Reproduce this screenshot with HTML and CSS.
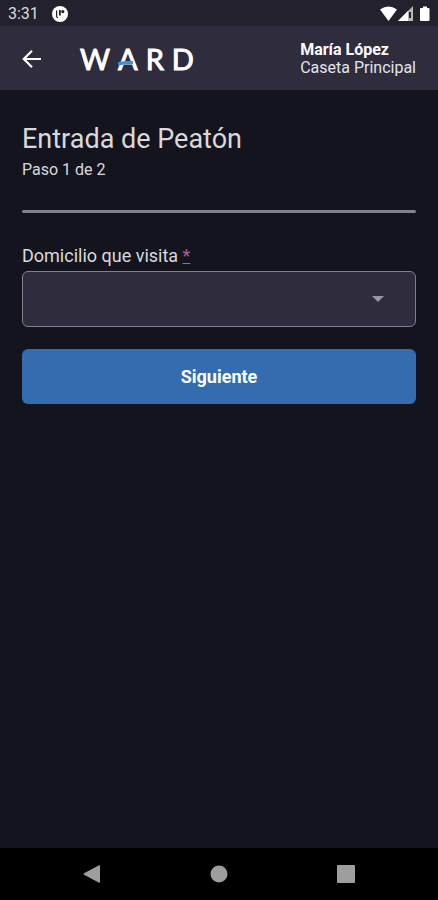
FILE: index.html
```html
<!DOCTYPE html>
<html lang="es">
<head>
<meta charset="utf-8">
<meta name="viewport" content="width=device-width, initial-scale=1">
<title>Entrada de Peatón</title>
<link rel="stylesheet" href="styles.css">
</head>
<body>
<div class="status-bar">
  <span class="status-time">3:31</span>
  <svg class="status-app" viewBox="0 0 16 16" aria-hidden="true">
    <circle cx="8" cy="8" r="8" fill="#fff"/>
    <path d="M4.600 4.500V10.500Q4.800 11.600 6 11.600" fill="none" stroke="#22212d" stroke-width="1.200"/>
    <path d="M7 4H8.800V9.500H7Z" fill="#22212d"/>
    <circle cx="10.800" cy="5.600" r="1.600" fill="#22212d"/>
  </svg>
  <svg class="status-signals" viewBox="0 0 50 16" aria-hidden="true">
    <path d="M0 3.500Q8.500-2.500 17 3.500L8.500 15Z" fill="#fff"/>
    <path d="M18 15L33 0V15Z" fill="#b8b8b4"/>
    <path d="M18 15L28 5V15Z" fill="#fff"/>
    <path d="M29 6h2v6h-2z" fill="#22212d"/>
    <path d="M40 3a1 1 0 0 1 1-1h2V.5h4V2h1.500a1 1 0 0 1 1 1V14a1 1 0 0 1-1 1H41a1 1 0 0 1-1-1Z" fill="#fff"/>
  </svg>
</div>
<header class="app-bar">
  <button class="back" type="button" aria-label="Atrás">
    <svg viewBox="0 0 20 20" aria-hidden="true"><path d="M19 10H2.500M10 1.800L1.800 10L10 18.200" fill="none" stroke="#fff" stroke-width="2.200"/></svg>
  </button>
  <div class="logo"><span>W</span><span class="logo-a">A<svg class="logo-bar" viewBox="0 0 20 6" aria-hidden="true"><path d="M0 4Q7 2.200 15 2.600" fill="none" stroke="#3f8fe0" stroke-width="3.200"/></svg></span><span>R</span><span>D</span></div>
  <div class="user">
    <strong>María López</strong>
    <span>Caseta Principal</span>
  </div>
</header>
<main class="content">
  <h1>Entrada de Peatón</h1>
  <p class="step">Paso 1 de 2</p>
  <hr>
  <form class="form">
    <label for="domicilio">Domicilio que visita <span class="required">*</span></label>
    <div class="select-box">
      <select id="domicilio" required><option value=""></option></select>
      <svg class="caret" viewBox="0 0 12 6" aria-hidden="true"><path d="M0 0H12L6 6Z" fill="#9896a6"/></svg>
    </div>
    <button class="next" type="button">Siguiente</button>
  </form>
</main>
<nav class="nav-bar" aria-label="Sistema">
  <button type="button" aria-label="Volver"><svg viewBox="0 0 18 18"><path d="M1 8.200L16 .2Q17 0 17 1V17Q17 18 16 17.800L1 9.800Q0 9 1 8.200Z" fill="#9e9e9e"/></svg></button>
  <button type="button" aria-label="Inicio"><svg viewBox="0 0 18 18"><circle cx="9" cy="9" r="8.500" fill="#9e9e9e"/></svg></button>
  <button type="button" aria-label="Recientes"><svg viewBox="0 0 18 18"><rect width="18" height="18" rx="1" fill="#9e9e9e"/></svg></button>
</nav>
</body>
</html>
```
FILE: styles.css
```css
* { box-sizing: border-box; }

body {
  margin: 0;
  min-height: 100vh;
  display: flex;
  flex-direction: column;
  background: #14141f;
  color: #d9d9dc;
  font-family: Roboto, "Liberation Sans", sans-serif;
  font-size: 16px;
}

button {
  padding: 0;
  border: 0;
  background: none;
  font: inherit;
  color: inherit;
}

svg { display: block; }

.status-bar {
  display: flex;
  align-items: center;
  height: 26px;
  padding: 2px 8px 0;
  background: #22212d;
}

.status-time { font-size: 16px; line-height: 24px; color: #dcdcdc; }
.status-app { width: 16px; height: 16px; margin-left: 13px; }
.status-signals { width: 50px; height: 16px; margin-left: auto; }

.app-bar {
  display: flex;
  align-items: center;
  height: 64px;
  padding: 2px 22px 0;
  background: #2e2c3d;
}

.back svg { width: 20px; height: 20px; }

.logo {
  display: flex;
  gap: 8px;
  margin-left: 38px;
  font-family: Lato, sans-serif;
  font-size: 29px;
  line-height: 32px;
  color: #fff;
  -webkit-text-stroke: 1px #fff;
}

.logo-a { position: relative; }
.logo-bar { position: absolute; left: 0; top: 17px; width: 20px; height: 6px; }

.user {
  display: flex;
  flex-direction: column;
  margin-left: auto;
  font-size: 16px;
  line-height: 18px;
  color: #e4e4e8;
}

.user strong { font-weight: 700; color: #fff; }

.content { flex: 1; padding: 32px 22px; }

h1 {
  margin: 0;
  font-size: 27px;
  line-height: 34px;
  font-weight: 400;
}

.step { margin: 3px 0 29px; font-size: 16px; line-height: 22px; }

hr {
  height: 3px;
  margin: 0 0 32px;
  border: 0;
  border-radius: 2px;
  background: #82808c;
}

.form { display: flex; flex-direction: column; }
.form label { font-size: 18px; line-height: 22px; margin-bottom: 4px; }
.required { color: #b0609c; text-decoration: underline; }
.select-box { position: relative; }

.select-box select {
  display: block;
  width: 100%;
  height: 56px;
  padding: 0 16px;
  appearance: none;
  border: 1px solid #82808c;
  border-radius: 6px;
  background: #2e2c3d;
  color: inherit;
  font: inherit;
}

.caret {
  position: absolute;
  right: 32px;
  top: 25px;
  width: 12px;
  height: 6px;
  pointer-events: none;
}

.next {
  height: 55px;
  margin-top: 22px;
  border-radius: 6px;
  background: #356cb0;
  color: #fff;
  font-size: 18px;
  font-weight: 700;
}

.nav-bar {
  display: grid;
  grid-template-columns: repeat(3, 1fr);
  place-items: center;
  height: 52px;
  padding: 0 29px;
  background: #000;
}

.nav-bar svg { width: 18px; height: 18px; }
```
